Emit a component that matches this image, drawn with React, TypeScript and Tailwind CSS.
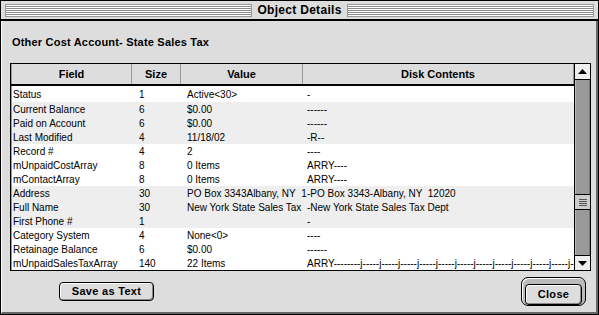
const rows: { field: string; size: string; value: string; disk: string; shade: boolean }[] = [
  { field: "Status", size: "1", value: "Active<30>", disk: "-", shade: false },
  { field: "Current Balance", size: "6", value: "$0.00", disk: "------", shade: true },
  { field: "Paid on Account", size: "6", value: "$0.00", disk: "------", shade: true },
  { field: "Last Modified", size: "4", value: "11/18/02", disk: "-R--", shade: true },
  { field: "Record #", size: "4", value: "2", disk: "----", shade: false },
  { field: "mUnpaidCostArray", size: "8", value: "0 Items", disk: "ARRY----", shade: false },
  { field: "mContactArray", size: "8", value: "0 Items", disk: "ARRY----", shade: false },
  { field: "Address", size: "30", value: "PO Box 3343Albany, NY  1", disk: "-PO Box 3343-Albany, NY  12020", shade: true },
  { field: "Full Name", size: "30", value: "New York State Sales Tax", disk: "-New York State Sales Tax Dept", shade: true },
  { field: "First Phone #", size: "1", value: "", disk: "-", shade: true },
  { field: "Category System", size: "4", value: "None<0>", disk: "----", shade: false },
  { field: "Retainage Balance", size: "6", value: "$0.00", disk: "------", shade: false },
  {
    field: "mUnpaidSalesTaxArray",
    size: "140",
    value: "22 Items",
    disk: "ARRY--------j-----j-----j-----j-----j-----j-----j-----j-----j-----j-----j-----j-----j",
    shade: false,
  },
];

function Stripes() {
  return (
    <div className="flex-1 h-[13px] border border-[#999] bg-[repeating-linear-gradient(to_bottom,#ffffff_0px,#ffffff_1px,#8a8a8a_1px,#8a8a8a_2px)]" />
  );
}

export default function App() {
  return (
    <div className="w-[599px] h-[315px] overflow-hidden bg-[#dddddd] border border-black flex flex-col font-['Liberation_Sans',Arial,sans-serif] text-black">
      {/* Title bar */}
      <div className="h-[20px] flex items-center gap-[4px] px-[4px] border-b-2 border-black shrink-0">
        <Stripes />
        <span className="text-[12px] font-bold tracking-[0.3px] leading-none px-[1px]">Object Details</span>
        <Stripes />
      </div>

      {/* Body */}
      <div className="flex-1 flex flex-col px-[8px] border-r-2 border-b-2 border-r-[#666] border-b-[#666] border-l border-l-white">
        <div className="h-[42px] flex items-center pl-[2px] text-[11px] font-bold tracking-[0.2px]">
          Other Cost Account- State Sales Tax
        </div>

        {/* Table */}
        <div className="w-[581px] h-[208px] border border-black flex bg-white">
          <div className="flex-1 flex flex-col overflow-hidden">
            {/* Header */}
            <div className="h-[22px] flex border-b-2 border-black bg-[#dddddd] text-[11px] font-bold shrink-0">
              <div className="w-[121px] flex items-center justify-center border-r border-[#999] border-l border-l-[#999]">Field</div>
              <div className="w-[49px] flex items-center justify-center border-r border-[#999]">Size</div>
              <div className="w-[122px] flex items-center justify-center border-r border-[#999]">Value</div>
              <div className="flex-1 flex items-center justify-center border-r border-[#999]">Disk Contents</div>
            </div>

            {/* Rows */}
            <div className="flex-1 flex flex-col text-[10px] border-l border-l-[#999]">
              {rows.map((r, i) => (
                <div
                  key={r.field}
                  className={`flex items-center whitespace-pre ${i === 0 ? "h-[16px] pt-[1px]" : "h-[14px]"} ${r.shade ? "bg-[#eeeeee]" : "bg-white"}`}
                >
                  <div className="w-[121px] pl-[1px]">{r.field}</div>
                  <div className="w-[49px] pl-[6px]">{r.size}</div>
                  <div className="w-[122px] pl-[5px] overflow-visible">{r.value}</div>
                  <div className="flex-1 pl-[3px] overflow-hidden">{r.disk}</div>
                </div>
              ))}
            </div>
          </div>

          {/* Scrollbar */}
          <div className="w-[16px] border-l border-black flex flex-col shrink-0">
            <div className="h-[16px] bg-[#eeeeee] border-b border-black flex items-center justify-center shrink-0">
              <svg width="9" height="5" viewBox="0 0 9 5">
                <path d="M4.5 0 L9 5 L0 5 Z" fill="#000" />
              </svg>
            </div>
            <div className="flex-1 flex flex-col bg-[#999999] border-l border-l-[#bbbbbb] border-r border-r-[#777777]">
              <div className="h-[114px]" />
              <div className="h-[16px] -mx-[1px] bg-[#cccccc] border-y border-black flex flex-col items-center justify-center gap-[1px]">
                <div className="w-[8px] h-[1px] bg-[#555]" />
                <div className="w-[8px] h-[1px] bg-[#555]" />
                <div className="w-[8px] h-[1px] bg-[#555]" />
                <div className="w-[8px] h-[1px] bg-[#555]" />
              </div>
              <div className="flex-1" />
            </div>
            <div className="h-[15px] bg-[#eeeeee] border-t border-black flex items-center justify-center shrink-0">
              <svg width="9" height="5" viewBox="0 0 9 5">
                <path d="M0 0 L9 0 L4.5 5 Z" fill="#000" />
              </svg>
            </div>
          </div>
        </div>

        {/* Buttons */}
        <div className="flex-1 flex items-center justify-between pl-[49px] pr-[2px]">
          <button className="w-[95px] h-[19px] rounded-[4px] border border-black bg-[#dddddd] shadow-[inset_1px_1px_0_#fff,inset_-1px_-1px_0_#888] text-[11px] font-bold tracking-[0.3px]">
            Save as Text
          </button>
          <div className="w-[65px] h-[29px] rounded-[7px] border border-black bg-[#bbbbbb] p-[3px] shadow-[inset_1px_1px_0_#fff]">
            <button className="w-full h-full rounded-[4px] border border-black bg-[#dddddd] shadow-[inset_1px_1px_0_#fff,inset_-1px_-1px_0_#888] text-[11px] font-bold tracking-[0.3px]">
              Close
            </button>
          </div>
        </div>
      </div>
    </div>
  );
}
